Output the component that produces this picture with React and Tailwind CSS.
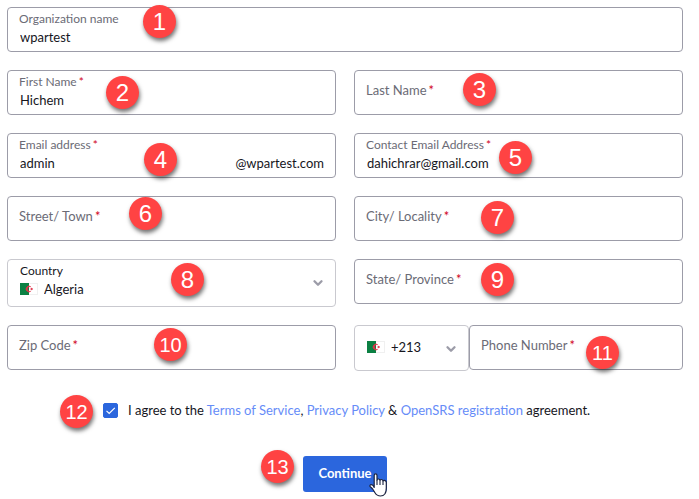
import { ChevronDown } from 'lucide-react'

function Step({ n, className }) {
  return (
    <span
      className={`pointer-events-none absolute z-10 flex size-[33px] items-center justify-center rounded-full bg-[#ff4343] font-['Liberation_Sans',sans-serif] leading-none text-white shadow-[1px_3px_4px_rgba(0,0,0,0.55)] ${n > 9 ? 'text-[20px]' : 'text-[24px]'} ${className}`}
    >
      {n}
    </span>
  )
}

function Required() {
  return <span className="ml-[2px] text-[#d0021b]">*</span>
}

function Field({ id, label, required, value, suffix, type = 'text', step, stepClass, className = '' }) {
  return (
    <div className={`relative flex h-[45px] flex-col justify-center rounded border border-[#9c9ca8] px-[11px] pb-[2px] ${className}`}>
      {value ? (
        <>
          <label htmlFor={id} className="text-[12px] leading-4 text-[#6b6b76]">
            {label}
            {required && <Required />}
          </label>
          <div className="flex items-center justify-between text-[13px] leading-5">
            <input id={id} type={type} defaultValue={value} className="h-5 w-full min-w-0 flex-1 pl-px outline-none" />
            {suffix && <span>{suffix}</span>}
          </div>
        </>
      ) : (
        <>
          <label htmlFor={id} className="mb-1 text-[13px] leading-5 text-[#6b6b76]">
            {label}
            {required && <Required />}
          </label>
          <input id={id} type={type} className="absolute inset-0 px-3 outline-none" />
        </>
      )}
      <Step n={step} className={stepClass} />
    </div>
  )
}

function Flag() {
  return (
    <svg viewBox="0 0 18 12" className="h-3 w-[18px] shrink-0" aria-hidden="true">
      <rect width="18" height="12" fill="#fff" />
      <rect x="0.5" y="0.5" width="17" height="11" fill="none" stroke="#f0f0f0" />
      <rect width="9" height="12" fill="#0b8043" />
      <path d="M11 3.8A3 3 0 1 0 11 8.2A2.4 2.4 0 1 1 11 3.8Z" fill="#e0324a" stroke="#e0324a" strokeWidth="0.4" />
      <path d="M9.6 6L11 5.5L11 4.4L11.8 5.3L13 5L12.3 6L13 7L11.8 6.7L11 7.6L11 6.5Z" fill="#e0324a" />
    </svg>
  )
}

function HandCursor() {
  return (
    <svg viewBox="0 0 18 24" className="pointer-events-none absolute top-[17px] right-0 h-6 w-[18px]" aria-hidden="true">
      <path
        d="M5.2 14.5V2.5C5.2 1.3 5.8 .8 6.6 .8S8 1.3 8 2.5V7.5C8 6.4 8.6 6 9.3 6S10.8 6.4 11 7.4C11.2 6.8 11.7 6.5 12.3 6.5C13.2 6.5 13.8 7 14 8C14.2 7.6 14.7 7.4 15.2 7.4C16.6 7.4 17.3 8.2 17.3 9.5V15C17.3 19.5 15.5 23 11.5 23C8.5 23 7 21.5 5.8 19.5L3.5 15.8C2.8 14.8 1.6 14.2 1 13.4C.6 12.6 1.2 11.7 2.2 11.7C3.5 11.7 4.5 12.7 5.2 14.5Z"
        fill="#fff"
        stroke="#1b2340"
        strokeWidth="1.2"
        strokeLinejoin="round"
      />
      <path d="M8 7.5V12M11 7.5V12M14 8V12" stroke="#1b2340" strokeWidth="1.1" />
    </svg>
  )
}

export default function App() {
  return (
    <form
      className="bg-white pt-[7px] pr-4 pb-[7px] pl-[7px] font-[Lato,sans-serif] text-[13px] text-[#16161d]"
      onSubmit={(e) => e.preventDefault()}
    >
      <div className="grid grid-cols-2 items-start gap-[18px]">
        <Field id="org" label="Organization name" value="wpartest" step={1} stepClass="-top-[3px] left-[135px]" className="col-span-2" />
        <Field id="first" label="First Name" required value="Hichem" step={2} stepClass="top-[5px] left-[98px]" />
        <Field id="last" label="Last Name" required step={3} stepClass="top-[2px] left-[108px]" />
        <Field id="email" label="Email address" required value="admin" suffix="@wpartest.com" step={4} stepClass="top-[9px] left-[136px]" />
        <Field id="contact" label="Contact Email Address" required type="email" value="dahichrar@gmail.com" step={5} stepClass="top-[7px] left-[144px]" />
        <Field id="street" label="Street/ Town" required step={6} stepClass="top-0 left-[121px]" />
        <Field id="city" label="City/ Locality" required step={7} stepClass="top-[4px] left-[126px]" />

        <div className="relative flex h-12 flex-col justify-center rounded border border-[#c9c9cf] px-3 pb-1">
          <label htmlFor="country" className="text-[12px] leading-4">Country</label>
          <div className="flex items-center gap-[6px]">
            <Flag />
            <select id="country" className="h-5 flex-1 appearance-none text-[13px] leading-5 outline-none">
              <option>Algeria</option>
            </select>
          </div>
          <ChevronDown size={14} strokeWidth={4} className="pointer-events-none absolute top-4 right-[10px] text-[#9c9ca8]" />
          <Step n={8} className="top-[3px] left-[163px]" />
        </div>
        <Field id="state" label="State/ Province" required step={9} stepClass="top-[3px] left-[126px]" />

        <Field id="zip" label="Zip Code" required step={10} stepClass="top-[2px] left-[146px]" />
        <div className="flex items-start">
          <div className="relative flex h-[46px] w-[115px] shrink-0 items-center gap-[6px] rounded border border-[#c9c9cf] px-3 pb-[2px]">
            <Flag />
            <select aria-label="Dialing code" className="h-5 min-w-0 flex-1 appearance-none text-[13px] leading-5 outline-none">
              <option>+213</option>
            </select>
            <ChevronDown size={14} strokeWidth={4} className="pointer-events-none absolute top-4 right-[10px] text-[#9c9ca8]" />
          </div>
          <Field id="phone" type="tel" label="Phone Number" required step={11} stepClass="top-[10px] left-[116px]" className="flex-1" />
        </div>
      </div>

      <div className="relative mt-[29px] flex items-center pl-24">
        <Step n={12} className="-top-[5px] left-[53px]" />
        <input
          id="agree"
          type="checkbox"
          defaultChecked
          className="peer size-[15px] appearance-none rounded-xs border border-[#2b66dd] checked:bg-[#2b66dd]"
        />
        <svg viewBox="0 0 15 15" className="pointer-events-none -ml-[15px] size-[15px]" fill="none" stroke="#fff" aria-hidden="true">
          <path d="M3.5 7.8L6.2 10.5L11.8 4.8" strokeWidth="1.2" />
        </svg>
        <p className="ml-[10px] leading-5">
          <label htmlFor="agree">I agree to the </label>
          <a href="#terms" className="text-[#668cf8]">Terms of Service</a>,{' '}
          <a href="#privacy" className="text-[#668cf8]">Privacy Policy</a> &{' '}
          <a href="#opensrs" className="text-[#668cf8]">OpenSRS registration</a> agreement.
        </p>
      </div>

      <div className="mt-9 flex justify-center">
        <div className="relative">
          <Step n={13} className="-top-[6px] -left-[42px]" />
          <button type="submit" className="h-9 w-[84px] rounded-[3px] bg-[#2b66dd] text-[13px] font-bold text-white">
            Continue
          </button>
          <HandCursor />
        </div>
      </div>
    </form>
  )
}
